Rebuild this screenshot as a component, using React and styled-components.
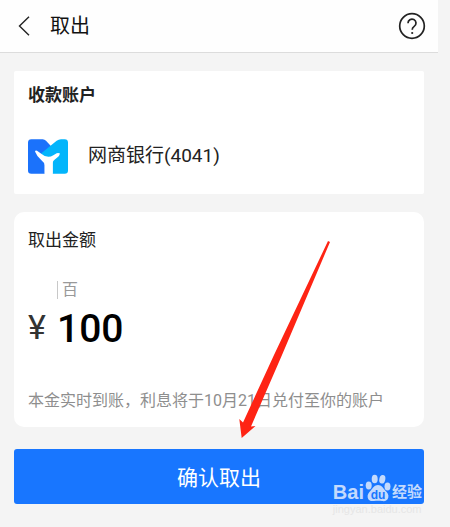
import React, { useState } from 'react';
import styled, { createGlobalStyle } from 'styled-components';

const GlobalStyle = createGlobalStyle`
  * {
    box-sizing: border-box;
  }

  body {
    margin: 0;
    background: #f4f4f4;
    color: #222;
    font-family: Roboto, 'Noto Sans CJK SC', sans-serif;
  }

  button,
  input {
    font-family: inherit;
  }
`;

const Page = styled.div`
  position: relative;
  padding: 0 12px 22px 0;
`;

const Header = styled.header`
  display: flex;
  align-items: center;
  gap: 16px;
  height: 53px;
  padding: 0 12px 0 16px;
  background: #fefefe;
  border-bottom: 1px solid #dcdcdc;
`;

const IconButton = styled.button`
  display: flex;
  padding: 0;
  border: none;
  background: none;
  color: #222;
  cursor: pointer;
`;

const Title = styled.h1`
  flex: 1;
  margin: 0;
  color: #111;
  font-size: 20px;
  font-weight: 400;
  line-height: 28px;
`;

const Content = styled.main`
  display: flex;
  flex-direction: column;
  gap: 18px;
  padding: 18px 14px 0;
`;

const Card = styled.section`
  padding: 12px 14px;
  background: #fff;
  border-radius: ${props => props.$radius}px;
`;

const CardTitle = styled.h2`
  margin: 0;
  font-size: 17px;
  font-weight: 700;
  line-height: 24px;
`;

const AccountRow = styled.div`
  display: flex;
  align-items: center;
  gap: 20px;
  padding: 30px 0 7px;
  font-size: 19px;
  line-height: 38px;
`;

const AmountLabel = styled.label`
  display: block;
  padding-top: 4px;
  font-size: 17px;
  line-height: 24px;
`;

const Unit = styled.div`
  margin: 29px 0 0 29px;
  padding-left: 4px;
  border-left: 1px solid #c8c8c8;
  color: #999;
  font-size: 16px;
  line-height: 18px;
`;

const AmountRow = styled.div`
  display: flex;
  align-items: flex-start;
  gap: 10px;
  padding-top: 8px;
`;

const Currency = styled.span`
  width: 19px;
  color: #333;
  font-size: 34px;
  line-height: 40px;
`;

const AmountInput = styled.input`
  flex: 1;
  min-width: 0;
  height: 44px;
  padding: 0;
  border: none;
  outline: none;
  background: none;
  color: #000;
  font-size: 39px;
  font-weight: 500;
`;

const Note = styled.p`
  margin: 38px 0 0;
  padding-bottom: 2px;
  color: #8e8e8e;
  font-size: 16px;
  line-height: 24px;
  white-space: nowrap;
`;

const SubmitButton = styled.button`
  height: 55px;
  margin-top: 4px;
  padding: 0 0 2px;
  border: none;
  border-radius: 3px;
  background: #1876ff;
  color: #fff;
  font-size: 21px;
  cursor: pointer;
`;

const Arrow = styled.svg`
  position: absolute;
  top: 241px;
  left: 239px;
  pointer-events: none;
`;

const Watermark = styled.div`
  position: absolute;
  top: 474px;
  right: 28px;
  pointer-events: none;
`;

const Brand = styled.div`
  display: flex;
  align-items: flex-end;
  gap: 1px;
  color: #c3dafd;
  font-family: 'Liberation Sans', 'Noto Sans CJK SC', sans-serif;
  font-size: 20px;
  font-weight: 700;
  line-height: 20px;
`;

const BrandName = styled.span`
  font-size: 15px;
`;

const Site = styled.div`
  color: #e6e6e6;
  font-family: 'Liberation Sans', sans-serif;
  font-size: 11px;
  line-height: 14px;
`;

const BackIcon = () => (
  <svg width="18" height="20" viewBox="0 0 18 20" fill="none" stroke="currentColor" strokeWidth="1.4">
    <path d="M13 .8 3.500 10l9.500 9.200" />
  </svg>
);

const HelpIcon = () => (
  <svg width="28" height="28" viewBox="0 0 28 28" fill="none" stroke="currentColor" strokeWidth="1.7">
    <circle cx="14" cy="14" r="12.3" />
    <path d="M10 11.2a4 4 0 1 1 6.200 3.200c-1.500 1-2 1.500-2 3.400" />
    <circle cx="14.2" cy="21" r="1.1" fill="currentColor" stroke="none" />
  </svg>
);

const BankLogo = () => (
  <svg width="40" height="35" viewBox="0 0 120 104">
    <path fill="#1b72fb" d="M10 0h34q6 0 10 5l16 17-20 26v56H10Q0 104 0 94V10Q0 0 10 0z" />
    <path fill="#03b5fb" d="M40 42 86 5q6-5 13-5h11q10 0 10 10v84q0 10-10 10H74V62H50z" />
    <path
      fill="#fff"
      d="M21 37q1-4 6-2l15 10q9 8 19 8 8 0 15-5l10-6q6-2 10 1-1 7-9 13-13 9-13 16v32H50V78q0-7-9-14-14-11-20-27z"
    />
  </svg>
);

const PawIcon = () => (
  <svg width="26" height="28" viewBox="0 0 26 28" fill="#c3dafd">
    <ellipse cx="3.7" cy="11.5" rx="3" ry="4" />
    <ellipse cx="9.7" cy="5" rx="3" ry="4.3" />
    <ellipse cx="17.3" cy="5.3" rx="3" ry="4.3" transform="rotate(12 17.3 5.3)" />
    <ellipse cx="22.5" cy="12.5" rx="3" ry="4" />
    <path d="M13 11c3.500 0 5 3 7 5.200 2.500 2.300 4 4.300 3.300 7.300-.8 3.500-3.800 4-6.300 3.500-2.500-.4-5.500-.4-8 0-3 .5-5.700-.5-6.300-3.500-.6-3 1-5 3.300-7.300C8 14 9.500 11 13 11z" />
    <text x="13" y="25" textAnchor="middle" fill="#1876ff" fontFamily="Liberation Sans" fontWeight="700" fontSize="12">
      du
    </text>
  </svg>
);

const App = () => {
  const [amount, setAmount] = useState('100');

  return (
    <Page>
      <GlobalStyle />
      <Header>
        <IconButton type="button" aria-label="返回">
          <BackIcon />
        </IconButton>
        <Title>取出</Title>
        <IconButton type="button" aria-label="帮助">
          <HelpIcon />
        </IconButton>
      </Header>

      <Content>
        <Card $radius={2}>
          <CardTitle>收款账户</CardTitle>
          <AccountRow>
            <BankLogo />
            <span>网商银行(4041)</span>
          </AccountRow>
        </Card>

        <Card $radius={10}>
          <AmountLabel htmlFor="amount">取出金额</AmountLabel>
          <Unit>百</Unit>
          <AmountRow>
            <Currency>¥</Currency>
            <AmountInput
              id="amount"
              type="text"
              inputMode="decimal"
              value={amount}
              onChange={e => setAmount(e.target.value)}
            />
          </AmountRow>
          <Note>本金实时到账，利息将于10月21日兑付至你的账户</Note>
        </Card>

        <SubmitButton type="button">确认取出</SubmitButton>
      </Content>

      <Arrow width="92" height="198" viewBox="0 0 92 198">
        <path fill="#fe2414" d="M89 0 91 1 43 114 12 185.500 16.500 185 2.700 197 .3 178 4 181.500 35 114z" />
      </Arrow>

      <Watermark aria-hidden="true">
        <Brand>
          Bai
          <PawIcon />
          <BrandName>经验</BrandName>
        </Brand>
        <Site>jingyan.baidu.com</Site>
      </Watermark>
    </Page>
  );
};

export default App;
